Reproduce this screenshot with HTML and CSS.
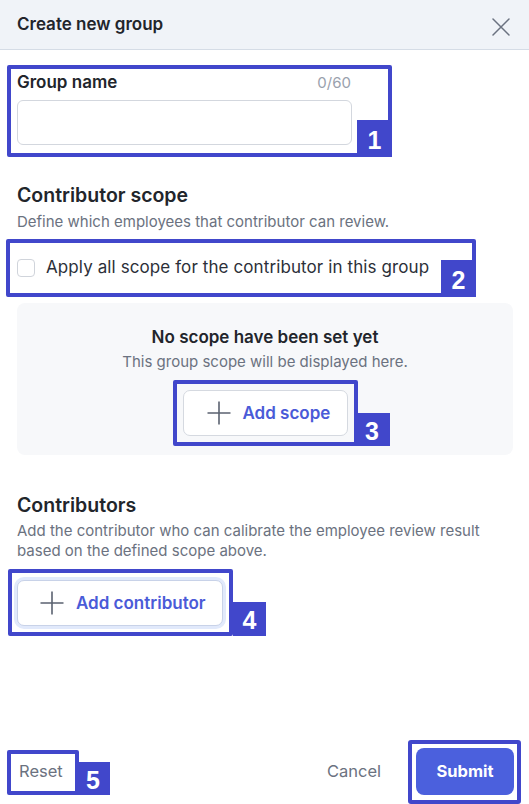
FILE: index.html
```html
<!DOCTYPE html>
<html lang="en">
<head>
<meta charset="utf-8">
<title>Create new group</title>
<link rel="stylesheet" href="styles.css">
</head>
<body>
<div class="drawer">
  <header class="drawer-header">
    <h1 class="drawer-title">Create new group</h1>
    <button class="close-btn" aria-label="Close">
      <svg width="18" height="18" viewBox="0 0 18 18"><path d="M1 1L17 17M17 1L1 17" stroke="#6b7280" stroke-width="1.5" fill="none" stroke-linecap="round"/></svg>
    </button>
  </header>

  <main class="drawer-body">
    <section class="field">
      <div class="field-top">
        <label class="field-label" for="gname">Group name</label>
        <span class="counter">0/60</span>
      </div>
      <input class="text-input" id="gname" type="text">
    </section>

    <section class="section scope">
      <h2 class="section-title">Contributor scope</h2>
      <p class="section-desc">Define which employees that contributor can review.</p>
      <label class="check-row">
        <span class="checkbox"></span>
        <span class="check-text">Apply all scope for the contributor in this group</span>
      </label>
      <div class="empty-box">
        <div class="empty-title">No scope have been set yet</div>
        <div class="empty-desc">This group scope will be displayed here.</div>
        <button class="add-btn scope-btn">
          <svg width="24" height="24" viewBox="0 0 24 24"><path d="M12 0.5V23.5M0.5 12H23.5" stroke="#5b6270" stroke-width="1.6" fill="none"/></svg>
          <span>Add scope</span>
        </button>
      </div>
    </section>

    <section class="section contributors">
      <h2 class="section-title">Contributors</h2>
      <p class="section-desc">Add the contributor who can calibrate the employee review result based on the defined scope above.</p>
      <button class="add-btn contrib-btn">
        <svg width="24" height="24" viewBox="0 0 24 24"><path d="M12 0.5V23.5M0.5 12H23.5" stroke="#5b6270" stroke-width="1.6" fill="none"/></svg>
        <span>Add contributor</span>
      </button>
    </section>
  </main>

  <footer class="drawer-footer">
    <button class="link-btn reset-btn">Reset</button>
    <div class="footer-right">
      <button class="link-btn cancel-btn">Cancel</button>
      <button class="submit-btn">Submit</button>
    </div>
  </footer>

  <div class="anno a1"><span class="badge b-in">1</span></div>
  <div class="anno a2"><span class="badge b-in">2</span></div>
  <div class="anno a3"><span class="badge b-out b3">3</span></div>
  <div class="anno a4"><span class="badge b-out b4">4</span></div>
  <div class="anno a5"><span class="badge b-out b5">5</span></div>
  <div class="anno a6"></div>
</div>
</body>
</html>
```

FILE: styles.css
```css
* { box-sizing: border-box; }
html, body { margin: 0; padding: 0; background: #ffffff; }
body { font-family: Inter, "Noto Sans", "Liberation Sans", sans-serif; color: #22252b; }
button { font-family: inherit; cursor: pointer; }

.drawer {
  position: relative;
  width: 529px;
  height: 804px;
  display: flex;
  flex-direction: column;
  overflow: hidden;
}

.drawer-header {
  height: 50px;
  flex: none;
  background: #f0f3f8;
  border-bottom: 1px solid #d5dce6;
  display: flex;
  align-items: center;
  justify-content: space-between;
  padding: 0 19px 0 17px;
}
.drawer-title {
  margin: 0;
  font-size: 17px;
  line-height: 20px;
  font-weight: 600;
  color: #22252b;
  padding-bottom: 2px;
}
.close-btn {
  border: 0;
  background: none;
  padding: 0;
  width: 18px;
  height: 18px;
  display: flex;
  margin-top: 4px;
}

.drawer-body {
  flex: 1;
  padding: 21px 16px 0 17px;
}

.field { width: 335px; }
.field-top {
  display: flex;
  justify-content: space-between;
  align-items: baseline;
  height: 22px;
}
.field-label {
  font-size: 17px;
  line-height: 22px;
  font-weight: 600;
}
.counter {
  font-size: 15px;
  color: #9aa1ad;
  margin-right: 1px;
}
.text-input {
  display: block;
  width: 335px;
  height: 45px;
  margin-top: 7px;
  border: 1px solid #d3d7de;
  border-radius: 6px;
  background: #fff;
}

.section { margin-top: 37px; }
.section-title {
  margin: 0;
  font-size: 19.5px;
  line-height: 26px;
  font-weight: 600;
  color: #22252b;
}
.section-desc {
  margin: 4px 0 0;
  font-size: 15px;
  line-height: 20px;
  color: #6b7280;
}
.contributors .section-desc { margin-top: 3px; }

.check-row {
  display: flex;
  align-items: center;
  gap: 11px;
  margin-top: 23px;
  height: 24px;
}
.checkbox {
  width: 18px;
  height: 18px;
  border: 1px solid #d0d4db;
  border-radius: 4px;
  background: #fff;
  flex: none;
  margin-top: 2px;
}
.check-text {
  font-size: 17px;
  line-height: 24px;
  color: #2c3039;
  letter-spacing: 0.1px;
}

.empty-box {
  margin-top: 24px;
  background: #f7f8fa;
  border-radius: 8px;
  padding: 23px 16px 19px;
  display: flex;
  flex-direction: column;
  align-items: center;
}
.empty-title {
  font-size: 17px;
  line-height: 22px;
  font-weight: 600;
  color: #22252b;
}
.empty-desc {
  margin-top: 4px;
  font-size: 15px;
  line-height: 20px;
  color: #6b7280;
}

.add-btn {
  display: flex;
  align-items: center;
  gap: 12px;
  height: 46px;
  border: 1px solid #d5d9e0;
  border-radius: 7px;
  background: #fff;
  font-size: 17px;
  font-weight: 600;
  color: #4a5bd8;
}
.add-btn svg { flex: none; }
.scope-btn {
  margin-top: 18px;
  width: 165px;
  padding: 0 10px 0 23px;
}
.contrib-btn {
  margin-top: 19px;
  width: 206px;
  padding: 0 10px 0 22px;
  border-color: #c8d2e8;
  box-shadow: 0 0 0 3px #e1e9fb;
}

.drawer-footer {
  flex: none;
  height: 56px;
  margin-bottom: 5px;
  display: flex;
  align-items: center;
  justify-content: space-between;
  padding: 0 15px 0 19px;
}
.footer-right {
  display: flex;
  align-items: center;
  gap: 35px;
}
.link-btn {
  border: 0;
  background: none;
  padding: 0;
  font-size: 16.5px;
  line-height: 24px;
  color: #6b7280;
}
.submit-btn {
  width: 98px;
  height: 47px;
  border: 0;
  border-radius: 8px;
  background: #4b60dd;
  color: #fff;
  font-size: 16.5px;
  font-weight: 700;
}

/* annotation overlays */
.anno {
  position: absolute;
  border: 4px solid #4147cb;
  border-radius: 2px;
  pointer-events: none;
}
.badge {
  position: absolute;
  display: flex;
  align-items: center;
  justify-content: center;
  background: #4147cb;
  color: #fff;
  font-family: "Liberation Sans", Arial, sans-serif;
  font-weight: 700;
  font-size: 25px;
  line-height: 1;
}
.b-in { right: -4px; bottom: -4px; width: 35px; height: 37px; padding-top: 3px; }
.b-out { bottom: -4px; }
.a1 { left: 7px; top: 65px; width: 385px; height: 92px; }
.a2 { left: 6px; top: 239px; width: 470px; height: 58px; }
.a3 { left: 173px; top: 380px; width: 185px; height: 66px; }
.b3 { left: 177px; width: 36px; height: 33px; padding-top: 3px; }
.a4 { left: 8px; top: 569px; width: 225px; height: 67px; }
.b4 { left: 221px; width: 33px; height: 34px; padding-top: 3px; }
.a5 { left: 7px; top: 750px; width: 72px; height: 45px; }
.b5 { left: 65px; width: 34px; height: 33px; padding-top: 3px; }
.a6 { left: 408px; top: 740px; width: 113px; height: 64px; border-radius: 3px; }
```
